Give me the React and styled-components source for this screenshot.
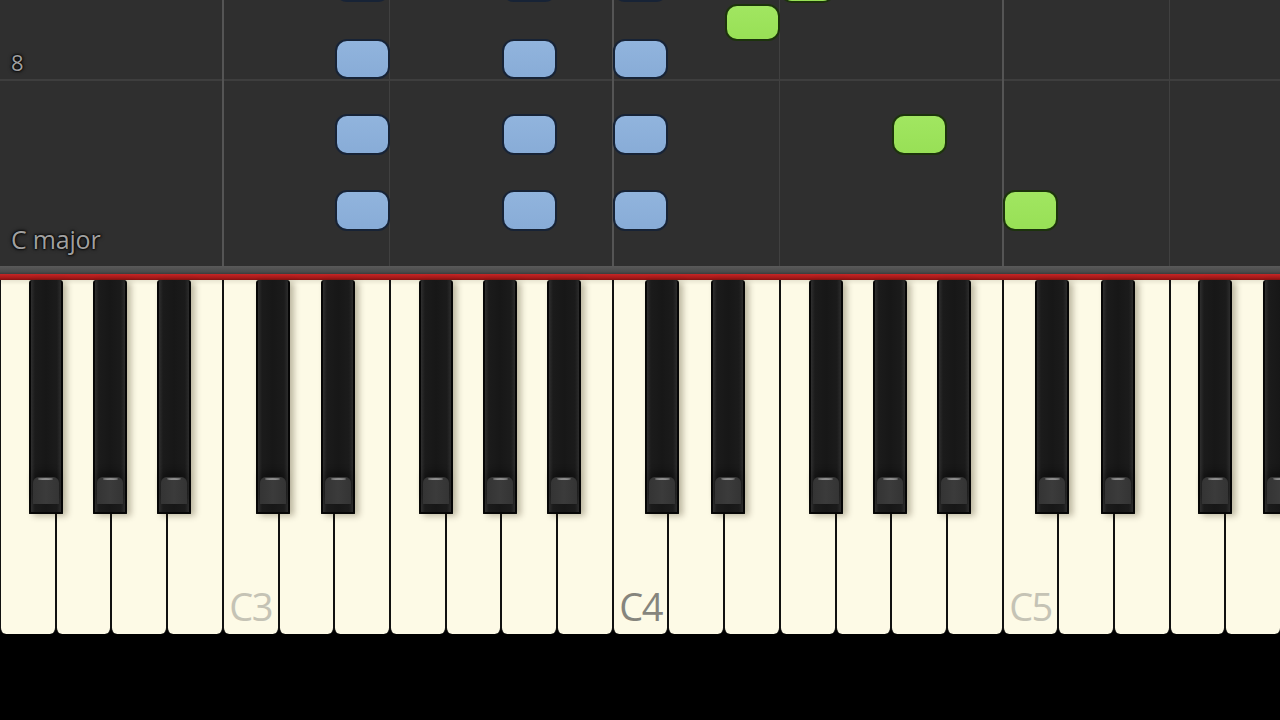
import React from "react";
import styled, { createGlobalStyle } from "styled-components";

const KEY_W = 1281 / 23;
const FIELD_H = 266;

const Global = createGlobalStyle`
  html, body { margin: 0; padding: 0; background: #000; }
  body { font-family: "Open Sans", "Noto Sans", sans-serif; overflow: hidden; }
`;

const Screen = styled.div`
  width: 1280px;
  height: 720px;
  display: flex;
  flex-direction: column;
  background: #000;
  overflow: hidden;
`;

const NoteField = styled.div`
  position: relative;
  height: ${FIELD_H}px;
  flex: none;
  background: #2f2f2f;
  overflow: hidden;
`;

const VLine = styled.div`
  position: absolute;
  top: 0;
  bottom: 0;
  left: ${(p) => p.$x}px;
  width: ${(p) => (p.$strong ? 2 : 1)}px;
  background: ${(p) => (p.$strong ? "#555" : "#404040")};
`;

const HLine = styled.div`
  position: absolute;
  left: 0;
  right: 0;
  top: ${(p) => p.$y}px;
  height: 2px;
  background: #3e3e3e;
`;

const Note = styled.div`
  position: absolute;
  left: ${(p) => p.$x}px;
  top: ${(p) => p.$y}px;
  width: ${KEY_W - 0.5}px;
  height: ${(p) => p.$h}px;
  box-sizing: border-box;
  border-radius: 12px;
  border: 2px solid ${(p) => (p.$green ? "#1c330c" : "#172336")};
  background: ${(p) =>
    p.$green
      ? "linear-gradient(#a1e661, #98e056)"
      : "linear-gradient(#91b4dd, #88acd7)"};
`;

const FieldLabel = styled.div`
  position: absolute;
  left: 11px;
  top: ${(p) => p.$y}px;
  font-size: ${(p) => p.$size}px;
  line-height: 1;
  color: #a0a0a0;
  letter-spacing: -0.2px;
  text-shadow: 0 0 2px #000, 0 0 2px #000, 0 0 4px #000;
`;

const Rail = styled.div`
  height: 8px;
  flex: none;
  background: linear-gradient(#5a5a5a, #4c4c4c 70%, #3c3c3c);
`;

const RedFelt = styled.div`
  height: 6px;
  flex: none;
  background: linear-gradient(#c42626, #a81a1a 60%, #801111);
`;

const Keyboard = styled.div`
  height: 354px;
  flex: none;
  width: 1281px;
  display: flex;
  background: #000;
`;

const WhiteKey = styled.div`
  position: relative;
  flex: 1;
  box-sizing: border-box;
  border-left: 1px solid #111;
  border-right: 1px solid #111;
  border-radius: 0 0 6px 6px;
  background: linear-gradient(#e9e6d2 0px, #fdfae6 5px, #fdfae6 100%);
  display: flex;
  flex-direction: column;
  justify-content: flex-end;
  align-items: center;
  padding-bottom: 9px;
`;

const KeyLabel = styled.span`
  font-family: "Open Sans", "Noto Sans", sans-serif;
  font-size: 38px;
  line-height: 1;
  letter-spacing: -1.5px;
  color: ${(p) => (p.$middle ? "#86857d" : "#c5c3b5")};
`;

const BlackKey = styled.div`
  position: absolute;
  z-index: 2;
  top: 0;
  left: calc(100% - 17px + ${(p) => p.$offset}px);
  width: 34px;
  height: 234px;
  box-sizing: border-box;
  border: 2px solid #060606;
  border-top: none;
  border-radius: 3px 3px 1px 1px;
  background: linear-gradient(
    to right,
    #2e2e2e 0px,
    #1b1b1b 4px,
    #171717 50%,
    #1b1b1b calc(100% - 4px),
    #2c2c2c 100%
  );
  box-shadow: 4px 2px 6px rgba(40, 30, 0, 0.3);
  display: flex;
  flex-direction: column;
  justify-content: flex-end;
  padding: 0 2px 8px;
`;

const BlackKeyFront = styled.div`
  position: relative;
  height: 27px;
  border-radius: 6px 6px 0 0;
  background: linear-gradient(
    to right,
    #343434 0%,
    #3b3b3b 49%,
    #262626 50%,
    #3b3b3b 51%,
    #343434 100%
  );
  box-shadow: 0 -6px 6px rgba(0, 0, 0, 0.35);

  &::before {
    content: "";
    position: absolute;
    top: 1px;
    left: 22%;
    right: 22%;
    height: 2px;
    border-radius: 50%;
    background: rgba(170, 170, 170, 0.75);
  }
`;

const BottomBar = styled.div`
  flex: 1;
  background: #000;
`;

const LETTERS = ["F", "G", "A", "B", "C", "D", "E"];
const BLACK_OFFSET = { C: -5, D: 5, F: -9, G: 0, A: 8 };

const whiteKeys = Array.from({ length: 23 }, (_, i) => {
  const letter = LETTERS[i % 7];
  const octave = 2 + Math.floor((i + 3) / 7);
  return {
    i,
    letter,
    name: `${letter}${octave}`,
    hasBlack: letter in BLACK_OFFSET,
    offset: BLACK_OFFSET[letter],
  };
});

const gridLines = [4, 7, 11, 14, 18, 21].map((k) => ({
  k,
  strong: LETTERS[k % 7] === "C",
}));

const notes = [
  { k: 6, y: -36, h: 38 },
  { k: 9, y: -36, h: 38 },
  { k: 11, y: -36, h: 38 },
  { k: 6, y: 39, h: 40 },
  { k: 9, y: 39, h: 40 },
  { k: 11, y: 39, h: 40 },
  { k: 6, y: 114, h: 41 },
  { k: 9, y: 114, h: 41 },
  { k: 11, y: 114, h: 41 },
  { k: 6, y: 190, h: 41 },
  { k: 9, y: 190, h: 41 },
  { k: 11, y: 190, h: 41 },
  { k: 14, y: -36, h: 39, green: true },
  { k: 13, y: 4, h: 37, green: true },
  { k: 16, y: 114, h: 41, green: true },
  { k: 18, y: 190, h: 41, green: true },
];

export default function App() {
  return (
    <Screen>
      <Global />
      <NoteField>
        <HLine $y={79} />
        {gridLines.map((g) => (
          <VLine key={g.k} $x={Math.round(g.k * KEY_W) - 1} $strong={g.strong} />
        ))}
        {notes.map((n, idx) => (
          <Note
            key={idx}
            $x={n.k * KEY_W + 0.5}
            $y={n.y}
            $h={n.h}
            $green={n.green}
          />
        ))}
        <FieldLabel $y={51} $size={22}>
          8
        </FieldLabel>
        <FieldLabel $y={227} $size={25}>
          C major
        </FieldLabel>
      </NoteField>
      <Rail />
      <RedFelt />
      <Keyboard>
        {whiteKeys.map((w) => (
          <WhiteKey key={w.name}>
            {w.letter === "C" && (
              <KeyLabel $middle={w.name === "C4"}>{w.name}</KeyLabel>
            )}
            {w.hasBlack && (
              <BlackKey $offset={w.offset}>
                <BlackKeyFront />
              </BlackKey>
            )}
          </WhiteKey>
        ))}
      </Keyboard>
      <BottomBar />
    </Screen>
  );
}
